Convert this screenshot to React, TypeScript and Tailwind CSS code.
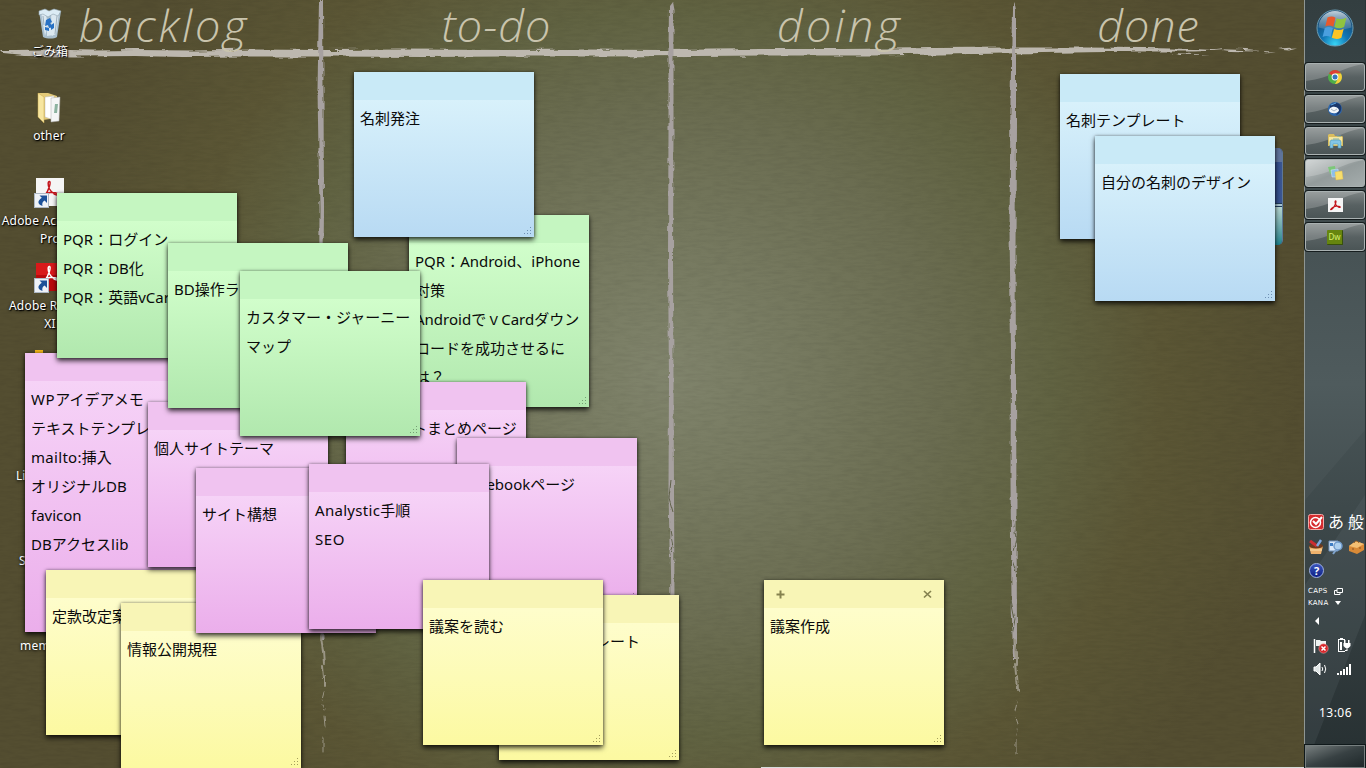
import type { ReactNode } from 'react';

type Tone = 'blue' | 'green' | 'pink' | 'yellow';

const tones: Record<Tone, { head: string; body: string; dot: string }> = {
  blue: { head: 'bg-[#c9eaf7]', body: 'bg-linear-to-b from-[#d8f1fb] to-[#b8daf3]', dot: '#6f90b4' },
  green: { head: 'bg-[#c5f6c1]', body: 'bg-linear-to-b from-[#d1fecb] to-[#b1e8ae]', dot: '#75a075' },
  pink: { head: 'bg-[#f0c3f0]', body: 'bg-linear-to-b from-[#f6d3f7] to-[#ebaeeb]', dot: '#9a6b9c' },
  yellow: { head: 'bg-[#f8f5b6]', body: 'bg-linear-to-b from-[#fefdcb] to-[#fcf9a1]', dot: '#a39e5c' },
};

type NoteData = { tone: Tone; place: string; lines: string[]; grip?: boolean; active?: boolean };

const notes: NoteData[] = [
  { tone: 'pink', place: 'left-[25px] top-[353px] h-[279px]', lines: ['WPアイデアメモ', 'テキストテンプレ', 'mailto:挿入', 'オリジナルDB', 'favicon', 'DBアクセスlib'] },
  { tone: 'yellow', place: 'left-[46px] top-[570px] h-[165px]', lines: ['定款改定案'] },
  { tone: 'yellow', place: 'left-[121px] top-[603px] h-[165px]', lines: ['情報公開規程'], grip: true },
  { tone: 'green', place: 'left-[57px] top-[193px] h-[165px]', lines: ['PQR：ログイン', 'PQR：DB化', 'PQR：英語vCard'] },
  { tone: 'pink', place: 'left-[148px] top-[402px] h-[165px]', lines: ['個人サイトテーマ'] },
  { tone: 'green', place: 'left-[168px] top-[243px] h-[165px]', lines: ['BD操作ラ'] },
  { tone: 'green', place: 'left-[409px] top-[215px] h-[192px]', lines: ['PQR：Android、iPhone', '対策', 'AndroidでｖCardダウン', 'ロードを成功させるに', 'は？'], grip: true },
  { tone: 'pink', place: 'left-[346px] top-[382px] h-[165px]', lines: ['　　　　トまとめページ'] },
  { tone: 'pink', place: 'left-[457px] top-[438px] h-[165px]', lines: ['Facebookページ'], grip: true },
  { tone: 'green', place: 'left-[240px] top-[271px] h-[165px]', lines: ['カスタマー・ジャーニー', 'マップ'], grip: true },
  { tone: 'blue', place: 'left-[354px] top-[72px] h-[165px]', lines: ['名刺発注'], grip: true },
  { tone: 'pink', place: 'left-[196px] top-[468px] h-[165px]', lines: ['サイト構想'] },
  { tone: 'pink', place: 'left-[309px] top-[464px] h-[165px]', lines: ['Analystic手順', 'SEO'] },
  { tone: 'yellow', place: 'left-[499px] top-[595px] h-[165px]', lines: ['　　　　　　レート'], grip: true },
  { tone: 'yellow', place: 'left-[423px] top-[580px] h-[165px]', lines: ['議案を読む'], grip: true },
  { tone: 'blue', place: 'left-[1060px] top-[74px] h-[165px]', lines: ['名刺テンプレート'] },
  { tone: 'blue', place: 'left-[1095px] top-[136px] h-[165px]', lines: ['自分の名刺のデザイン'], grip: true },
  { tone: 'yellow', place: 'left-[764px] top-[580px] h-[165px]', lines: ['議案作成'], grip: true, active: true },
];

function tracking(run: string) {
  if (/^(WP|SEO)$/.test(run)) return 'tracking-[0.6px]';
  if (/^(Analystic|mailto:|lib)$/.test(run)) return 'tracking-[0.3px]';
  return '';
}

function Line({ text }: { text: string }) {
  return (
    <p>
      {text.split(/([A-Za-z:]+)/).map((part, i) => (
        <span key={i} className={tracking(part)}>{part}</span>
      ))}
    </p>
  );
}

function Grip({ color }: { color: string }) {
  return (
    <svg className="absolute right-[2px] bottom-[2px]" width="9" height="9" viewBox="0 0 9 9" fill={color}>
      <path d="M7 1h1v1H7zM7 4h1v1H7zM4 4h1v1H4zM7 7h1v1H7zM4 7h1v1H4zM1 7h1v1H1z" />
    </svg>
  );
}

function Note({ note }: { note: NoteData }) {
  const t = tones[note.tone];
  return (
    <article className={`absolute flex w-[180px] flex-col shadow-[0_3px_5px_rgba(0,0,0,0.72),0_0_3px_rgba(0,0,0,0.4)] ${note.place}`}>
      <div className={`flex h-7 shrink-0 items-center justify-between px-[12px] ${t.head}`}>
        {note.active && (
          <>
            <svg width="9" height="9" viewBox="0 0 9 9" stroke="#85824f" strokeWidth="2">
              <path d="M4.500 .5v8M.5 4.500h8" />
            </svg>
            <svg width="9" height="9" viewBox="0 0 9 9" stroke="#85824f" strokeWidth="1.700">
              <path d="M1 1l7 6.500M8 1L1 7.500" />
            </svg>
          </>
        )}
      </div>
      <div className={`min-h-0 flex-1 overflow-hidden pt-[4px] pl-[6px] text-[15px] leading-[29px] whitespace-nowrap text-[#0a0a0a] ${t.body}`}>
        {note.lines.map((l) => (
          <Line key={l} text={l} />
        ))}
      </div>
      {note.grip && <Grip color={t.dot} />}
    </article>
  );
}

function Chalk() {
  return (
    <svg className="absolute inset-0" width="1366" height="768" viewBox="0 0 1366 768" fill="none">
      <defs>
        <filter id="rough" filterUnits="userSpaceOnUse" x="0" y="0" width="1366" height="768">
          <feTurbulence type="fractalNoise" baseFrequency="0.04 0.2" numOctaves="3" seed="4" result="n" />
          <feDisplacementMap in="SourceGraphic" in2="n" scale="6" xChannelSelector="R" yChannelSelector="G" />
        </filter>
        <filter id="roughV" filterUnits="userSpaceOnUse" x="0" y="0" width="1366" height="768">
          <feTurbulence type="fractalNoise" baseFrequency="0.2 0.08" numOctaves="3" seed="9" result="n" />
          <feDisplacementMap in="SourceGraphic" in2="n" scale="4" xChannelSelector="R" yChannelSelector="G" />
        </filter>
        <filter id="grain" x="0" y="0" width="100%" height="100%">
          <feTurbulence type="fractalNoise" baseFrequency="0.07 0.35" numOctaves="3" seed="2" />
          <feColorMatrix values="0 0 0 0 0  0 0 0 0 0  0 0 0 0 0  0.7 0 0 0 -0.25" />
        </filter>
      </defs>
      <rect width="1366" height="768" filter="url(#grain)" opacity="0.14" />
      <g filter="url(#rough)" fill="#bdb8af" transform="translate(0 1)">
        <path d="M0 49l14 0 30-.5 50 1 40-.5 60 .5 60-1 70 .5 80-.5 100 .5 80-.5 80 .5 100-1 80 0 90-1 80-.5 70 0 60 .5 50 1 30 1.500-30 1-60 0-90 1.500-70 1-100 1.500-100 0-80 .5-100 .5-90 0-80 .5-90-.5-90 0-60 .5-50-1-60 .5-50-.5-20-2z" />
        <path d="M1170 52l40 1.500-30 .5zM1215 48l30 1 15 1.500-30-.5zM1262 50l14 .8-10 .4zM1278 48.500l20-1-8 2z" />
      </g>
      <g filter="url(#roughV)" fill="#a7a1a0" transform="translate(-1 0)">
        <path d="M320 0h4l.5 90 .5 120-1 100 1 120v130l.5 80h-4l-1-80 .5-120-1-130 .5-100-2-120z" />
        <path d="M670 6l3-4 1.500 8v120l-.5 130 .5 120 .5 110 .5 110h-4l-2-110 .5-110-1-120 .5-130 0-80z" />
        <path d="M1013 10l2.500-8 1.500 8v110l-.5 130 .5 130 .5 130 .5 130-1 20h-3l-1.500-60-1-120 .5-130-1.500-120 1-130z" />
      </g>
      <g filter="url(#roughV)" stroke="#5f6149" strokeWidth="1">
        <path d="M671 480l-2 18 4 14M670 530l3 16-3 14M1013 520l3 18-3 14M1012 560l4 12M1011 600l4 20-3 14M322 580l-3 20" />
      </g>
      <g filter="url(#roughV)" stroke="#9a9584" strokeWidth="2" strokeLinecap="round">
        <path d="M321 636l2 16M323 650l1 14M322 666l1 12M325 676l0 10" />
        <path d="M324 692l-2 8M322 704l2 6M324 716l1 10M323 738l0 14" strokeWidth="1" />
        <path d="M1014 640l2 18M1017 652l0 14M1015 664l1 10M1017 676l1 14" />
        <path d="M1017 702l-2 8M1016 718l2 6M1017 730l-1 5M1016 740l0 13" strokeWidth="1" />
      </g>
    </svg>
  );
}

function Shortcut() {
  return (
    <svg className="absolute top-[15px] left-0" width="15" height="15" viewBox="0 0 15 15">
      <rect x=".5" y=".5" width="14" height="14" fill="#eef2f7" stroke="#aeb8c4" />
      <path d="M5.500 2.500h7.500v7.500l-2.400-2.400C8.500 9 7.800 10.500 8.500 13 3.500 11.500 3 8 7.800 4.800z" fill="#1c5199" />
    </svg>
  );
}

const pdfMark = 'M4 21c2-4 6-6 10-6.500 4-.4 8 .5 8 2-1 1.500-6-1-8.500-5.500C11.500 7 12 3 13.500 3.500c1.800 1-1 9-4.500 14-2 3-4 4.500-5 3.500z';

function DesktopItem({ place, children, label }: { place: string; children?: ReactNode; label: string[] }) {
  return (
    <div className={`absolute flex w-[100px] flex-col items-center text-[12px] leading-[18px] whitespace-nowrap text-white [text-shadow:0_1px_3px_#000,1px_1px_1px_#000] ${place}`}>
      <div className="relative flex h-[38px] w-[30px] justify-center">{children}</div>
      {label.map((l) => (
        <span key={l} className="tracking-[0.2px]">{l}</span>
      ))}
    </div>
  );
}

function DesktopIcons() {
  return (
    <>
      <DesktopItem place="left-0 top-[5px]" label={['ごみ箱']}>
        <svg width="28" height="34" viewBox="0 0 28 34">
          <path d="M3 6l4 26c4 2 11 2 14 0l4-26z" fill="#a9bfce" />
          <path d="M5 7l4 24 3-11-2-10zM15 8l8-1-3 22-4 2zM11 22l5-4 2 12-7 1z" fill="#dbe8f0" />
          <path d="M3 6l6-2 4 2 5-2 7 2-3 5-5-2-5 3-5-3-4 1z" fill="#dcecf5" stroke="#8fa3ae" strokeWidth=".6" />
          <path d="M10 15l4-2 2 4-2 1 3 4-4 1-1-3-3 1zM9 22l4 1 0 3-4-1zM15 20l3-2 0 5-3 2z" fill="#2771c4" />
          <path d="M7 11l1 9M21 11l-2 18" stroke="#8ba0ae" strokeWidth=".8" />
        </svg>
      </DesktopItem>
      <DesktopItem place="-left-[1px] top-[89px]" label={['other']}>
        <svg width="28" height="36" viewBox="0 0 28 36">
          <path d="M3 4l10 0 9 3v22l-14 2z" fill="#e3ca78" />
          <path d="M10 8l9-1v24l-9-3z" fill="#fff" stroke="#bbb" strokeWidth=".5" />
          <path d="M16 9l9-1-1 24-8 1z" fill="#f4f6f6" stroke="#aaa" strokeWidth=".5" />
          <path d="M20 15l3 0-1 9h-3z" fill="#8cb3a0" />
          <path d="M3 4l6 4 0 26-6-6z" fill="#f7e6a0" stroke="#c8a84c" strokeWidth=".5" />
        </svg>
      </DesktopItem>
      <DesktopItem place="left-0 top-[174px]" label={['Adobe Acrobat X', 'Pro']}>
        <svg className="mt-[4px]" width="28" height="28" viewBox="0 0 28 28">
          <rect width="28" height="28" fill="#f5f5f5" />
          <path d={pdfMark} fill="none" stroke="#c3151c" strokeWidth="1.500" />
        </svg>
        <div className="absolute top-[4px] -left-[1px]"><Shortcut /></div>
      </DesktopItem>
      <DesktopItem place="left-0 top-[259px]" label={['Adobe Reader', 'XI']}>
        <svg className="mt-[4px]" width="28" height="28" viewBox="0 0 28 28">
          <rect width="28" height="28" fill="#b80a0c" />
          <rect width="28" height="12" fill="#d8191a" />
          <path d={pdfMark} fill="none" stroke="#fff" strokeWidth="1.500" />
        </svg>
        <div className="absolute top-[4px] -left-[1px]"><Shortcut /></div>
      </DesktopItem>
      <div className="absolute top-[350px] left-[35px] h-[14px] w-[8px] bg-[#f0b51c]" />
      <div className="absolute top-[467px] left-[16px] flex w-[30px] flex-col text-[12px] leading-[18px] text-white [text-shadow:0_1px_3px_#000]">
        <span>Li</span>
        <span className="mt-[67px] pl-[3px]">S</span>
        <span className="mt-[67px] pl-[4px] tracking-[0.3px]">mem</span>
      </div>
      <div className="absolute top-[148px] left-[1262px] flex h-[97px] w-[21px] flex-col overflow-hidden rounded-[5px] border-r border-[#5d7796] bg-[#2b457c]">
        <div className="h-[14px] bg-[#60749c]" />
        <div className="h-[41px] bg-linear-to-r from-[#1c3472] to-[#3c5793]" />
        <div className="h-[4px] border-y border-[#203c59] bg-[#a8c3cf]" />
        <div className="flex-1 bg-linear-to-b from-[#b5d5d0] to-[#17858f]" />
      </div>
    </>
  );
}

function TaskButton({ children, active }: { children?: ReactNode; active?: boolean }) {
  return (
    <div
      className={`relative flex h-[28px] w-[60px] items-center justify-center overflow-hidden rounded-[3px] border border-[#a9b1b1] shadow-[0_0_0_1px_#161d1e] ${
        active
          ? 'bg-linear-to-br from-[#c7cccc] via-[#939b9b] to-[#a5adad]'
          : 'bg-linear-to-b from-[#7e8585] via-[#586162] to-[#4b5556]'
      }`}
    >
      <svg className="absolute inset-0" width="58" height="26" viewBox="0 0 58 26">
        <path d="M0 0h58C36 3 26 14 0 17z" fill="#fff" opacity=".2" />
      </svg>
      <div className="relative flex">{children}</div>
    </div>
  );
}

function StartOrb() {
  return (
    <svg width="38" height="38" viewBox="0 0 38 38">
      <defs>
        <radialGradient id="orb" cx=".5" cy=".95" r=".9">
          <stop offset="0" stopColor="#37d4f5" />
          <stop offset=".4" stopColor="#1277b6" />
          <stop offset="1" stopColor="#173f66" />
        </radialGradient>
        <linearGradient id="gloss" x1="0" y1="0" x2="0" y2="1">
          <stop offset="0" stopColor="#d5e3ea" stopOpacity=".9" />
          <stop offset="1" stopColor="#6f93ab" stopOpacity=".4" />
        </linearGradient>
      </defs>
      <circle cx="19" cy="19" r="18" fill="url(#orb)" stroke="#6a9db4" />
      <path d="M2.500 18.500a16.500 16.500 0 0 1 33 0c-10 3-22 3-33 0z" fill="url(#gloss)" />
      <path d="M11.500 8.500c3-1.500 5.800-1.300 8 .2l-2.200 9c-2.600-1.400-5.200-1.600-8-.3z" fill="#e8592b" />
      <path d="M20.600 9.200c3.200 1.600 6.300 1.400 9.800-.4l-2.300 9.200c-3.200 1.700-6.500 1.700-9.700.1z" fill="#8fc43f" />
      <path d="M8.800 18.900c2.900-1.400 5.700-1.100 8.100.2l-2.300 9c-2.500-1.400-5.200-1.400-8-.2z" fill="#4a9fdf" />
      <path d="M18.100 19.900c3.200 1.500 6.400 1.400 9.600-.2l-2.300 9c-3.200 1.600-6.400 1.600-9.600.1z" fill="#fcc425" />
    </svg>
  );
}

function Taskbar() {
  return (
    <aside className="relative flex h-full w-[62px] shrink-0 flex-col items-center border-x border-[#8f9693] border-r-[#2b3436] bg-linear-to-b from-[#333e40] via-[#4a5658] to-[#262f31] text-white">
      <svg className="absolute inset-0" width="60" height="768" viewBox="0 0 60 768">
        <path d="M0 768V585l60-90v120z" fill="#6c7778" opacity=".18" />
        <path d="M0 250h60v180L0 500z" fill="#fff" opacity=".03" />
      </svg>
      <div className="relative flex h-[62px] w-full shrink-0 items-start justify-center pt-[9px]">
        <StartOrb />
      </div>
      <div className="relative flex flex-col gap-[4px] pt-[1px]">
        <TaskButton>
          <svg width="14" height="14" viewBox="0 0 14 14">
            <circle cx="7" cy="7" r="7" fill="#4fae48" />
            <path d="M7 7L1 3.400A7 7 0 0 1 13 3.500H7z" fill="#dd4034" />
            <path d="M7 3.500h6A7 7 0 0 1 7 14l3-5.200z" fill="#f7cf3b" />
            <circle cx="7" cy="7" r="3.400" fill="#fff" />
            <circle cx="7" cy="7" r="2.500" fill="#3677bd" />
          </svg>
        </TaskButton>
        <TaskButton>
          <svg width="16" height="16" viewBox="0 0 16 16">
            <circle cx="8" cy="8" r="7" fill="#2d66ac" />
            <path d="M3 5c3-4 9-4 11 0 1 4-1 8-5 9 3-4 3-7-1-8-2-1-3 0-5 2z" fill="#1a376a" />
            <path d="M2 10c0-5 8-6 10-1 0 3-7 5-10 1z" fill="#f1f5f9" />
            <path d="M4 4l5-2" stroke="#5ea4df" />
            <path d="M4 8l3 2 3-2" fill="none" stroke="#8a9aaa" strokeWidth=".7" />
          </svg>
        </TaskButton>
        <TaskButton>
          <svg width="17" height="16" viewBox="0 0 17 16">
            <path d="M1 2l1-1h5l1 2h7l1 1v9H1z" fill="#d9bd5e" />
            <path d="M2 4h13v8H2z" fill="#f6e79f" />
            <path d="M3 15V9l1-2h9l1 2v6h-3v-4H6v4z" fill="#83c6e6" stroke="#4c93b5" strokeWidth=".6" />
            <path d="M6 6h6M10 3h4" stroke="#5fa6b8" strokeWidth=".8" />
          </svg>
        </TaskButton>
        <TaskButton active>
          <svg width="17" height="16" viewBox="0 0 17 16">
            <path d="M1 2l7-1 1 7-6 1z" fill="#7cc878" />
            <path d="M4 5l7-1 1 8-7 0z" fill="#8cbfea" stroke="#dcebf5" strokeWidth=".5" />
            <path d="M8 7l7-1 1 8-7 1z" fill="#f8de6b" stroke="#e5c149" strokeWidth=".4" />
          </svg>
        </TaskButton>
        <TaskButton>
          <svg width="15" height="14" viewBox="0 0 28 28" preserveAspectRatio="none">
            <rect width="28" height="28" fill="#f5f5f5" />
            <path d={pdfMark} transform="translate(1 2)" fill="none" stroke="#c3151c" strokeWidth="2.200" />
          </svg>
        </TaskButton>
        <TaskButton>
          <div className="flex h-[15px] w-[16px] items-center justify-center rounded-[1px] border-r border-b border-[#38500c] bg-[#66850f] text-[8px] leading-none text-[#d6f06e]">Dw</div>
        </TaskButton>
      </div>

      <div className="relative mt-auto flex w-full flex-col">
        <div className="flex h-[18px] items-center gap-[4px] pl-[3px]">
          <svg width="16" height="16" viewBox="0 0 16 16">
            <rect x=".5" y=".5" width="15" height="15" rx="2" fill="#d52b2f" stroke="#f0a9a5" />
            <circle cx="7.500" cy="8.500" r="5" fill="none" stroke="#fff" strokeWidth="1.500" />
            <path d="M5 7l3 3 6-7" fill="none" stroke="#fff" strokeWidth="2" />
          </svg>
          <span className="w-[16px] text-[16px] leading-[18px]">あ</span>
          <span className="w-[16px] text-[16px] leading-[18px]">般</span>
        </div>
        <div className="mt-[7px] flex h-[17px] items-center gap-[4px] pl-[3px]">
          <svg width="16" height="16" viewBox="0 0 16 16">
            <path d="M1 7h14l-2 8H3z" fill="#efb26c" />
            <ellipse cx="8" cy="7" rx="7" ry="2.500" fill="#6e3a1d" />
            <path d="M2 2l7 5" stroke="#cb2d31" strokeWidth="3" />
            <path d="M13 1l-4 6" stroke="#7fa8e0" strokeWidth="2.500" />
            <path d="M2 11h12" stroke="#f9e0ae" />
          </svg>
          <svg width="16" height="16" viewBox="0 0 16 16">
            <path d="M1 2h9v10H1z" fill="#dce9f7" stroke="#6f91bd" />
            <path d="M2 4h3v3H2z" fill="#3f7ec4" />
            <circle cx="10" cy="7" r="4" fill="#aed0ef" stroke="#6f9acb" strokeWidth="1.500" />
            <path d="M8 11l-3 4" stroke="#7fa3cc" strokeWidth="2" />
          </svg>
          <svg width="16" height="16" viewBox="0 0 16 16">
            <path d="M1 7l7-5 8 3v6l-7 4-8-3z" fill="#d98a37" />
            <path d="M1 7l7-5 8 3-7 4z" fill="#f3bf73" />
            <path d="M6 4c1-3 4-2 5 0M5 9v2M12 8v2" fill="none" stroke="#8c5520" />
          </svg>
        </div>
        <div className="mt-[8px] flex pl-[4px]">
          <div className="flex size-[15px] items-center justify-center rounded-full border border-[#9eb1e4] bg-linear-to-b from-[#3c56bd] to-[#101f85] text-[11px] leading-none font-bold">?</div>
        </div>
        <div className="mt-[7px] flex flex-col pl-[3px] font-['DejaVu_Sans',sans-serif] text-[7px] leading-[12px] tracking-[0.3px]">
          <div className="flex items-center">
            <span className="w-[26px]">CAPS</span>
            <svg width="9" height="7" viewBox="0 0 9 7" fill="none" stroke="#fff">
              <path d="M3 .5h5.500v4H3zM6 5v1.500H.5v-4H3" />
            </svg>
          </div>
          <div className="flex items-center">
            <span className="w-[27px]">KANA</span>
            <svg width="6" height="4" viewBox="0 0 6 4" fill="#fff"><path d="M0 0h6L3 4z" /></svg>
          </div>
        </div>
        <svg className="mt-[8px] ml-[10px]" width="4" height="8" viewBox="0 0 4 8" fill="#fff"><path d="M4 0v8L0 4z" /></svg>
        <div className="mt-[12px] flex h-[17px] items-center gap-[7px] pl-[8px]">
          <svg width="17" height="16" viewBox="0 0 17 16">
            <path d="M1.500 1v14" stroke="#fff" strokeWidth="1.500" />
            <path d="M3 2h4l1 1h5v6H8L7 8H3z" fill="#eef2f2" />
            <circle cx="10.500" cy="10.500" r="4.700" fill="#d8262b" stroke="#f3b2ae" strokeWidth=".5" />
            <path d="M8.500 8.500l4 4M12.500 8.500l-4 4" stroke="#fff" strokeWidth="1.500" />
          </svg>
          <svg width="14" height="16" viewBox="0 0 14 16" fill="#fff">
            <path d="M3 0h3v1h2v2H7V2H2v11h6v1H1V1h2zM3 4h2v8H3z" />
            <path d="M7 2h1.500v3H11V2h1.500v3h1v3l-2 2h-1v3H8v-1h1.500v-2h-1l-2-2V5H7z" />
          </svg>
        </div>
        <div className="mt-[7px] flex h-[16px] items-center gap-[8px] pl-[8px]">
          <svg width="16" height="14" viewBox="0 0 16 14" fill="none" stroke="#fff">
            <path d="M1 5h2l4-4v12L3 9H1z" fill="#dfe5e5" />
            <path d="M9 5q1.500 2 0 4M11.500 3q2.500 4 0 8" />
          </svg>
          <svg width="15" height="11" viewBox="0 0 15 11" fill="#fff">
            <path d="M0 9h2v2H0zM3 7h2v4H3zM6 5h2v6H6zM9 3h2v8H9zM12 0h2v11h-2z" />
          </svg>
        </div>
        <div className="mt-[27px] h-[18px] pl-[1px] text-center text-[12px] leading-[18px] tracking-[0.5px]">13:06</div>
        <div className="mt-[23px] h-[23px] w-[60px] border border-[#777f7f] bg-linear-to-br from-[#798080] via-[#384143] to-[#1f282a] shadow-[0_0_0_1px_#10191b]" />
      </div>
    </aside>
  );
}

export default function App() {
  return (
    <div className="flex h-[768px] w-[1366px] overflow-hidden bg-[#504a2f] font-['Noto_Sans','Noto_Sans_CJK_JP',sans-serif]">
      <main className="relative h-full w-[1304px] shrink-0 overflow-hidden bg-[radial-gradient(ellipse_690px_650px_at_665px_375px,#80846c_0%,#75785e_22%,#6b6d51_40%,#616342_56%,#5b5635_72%,#544e31_92%)]">
        <Chalk />
        <header className="relative flex h-[56px] font-['Open_Sans','Noto_Sans',sans-serif] text-[45px] leading-[49px] font-light text-[#c9c4ad] italic">
          <h1 className="w-[328px] text-center tracking-[2.900px]">backlog</h1>
          <h1 className="w-[337px] text-center tracking-[1px]">to-do</h1>
          <h1 className="w-[350px] text-center tracking-[3.300px]">doing</h1>
          <h1 className="w-[267px] text-center tracking-[1px]">done</h1>
        </header>
        <DesktopIcons />
        {notes.map((n) => (
          <Note key={n.place} note={n} />
        ))}
        <div className="absolute right-0 bottom-0 h-px w-[543px] bg-[#d8dbdc]" />
      </main>
      <Taskbar />
    </div>
  );
}
